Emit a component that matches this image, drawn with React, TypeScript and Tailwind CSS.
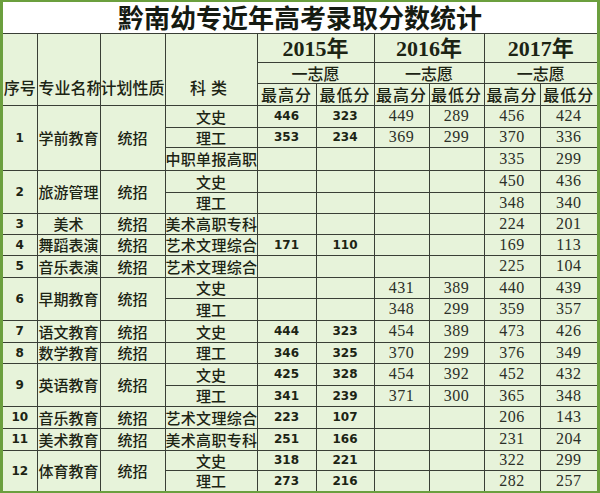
type Row = {
  head?: { no: string; name: string; span: number }
  kind: string
  wide?: boolean
  s: string[]
}

const rows: Row[] = [
  { head: { no: "1", name: "学前教育", span: 3 }, kind: "文史", s: ["446", "323", "449", "289", "456", "424"] },
  { kind: "理工", s: ["353", "234", "369", "299", "370", "336"] },
  { kind: "中职单报高职", wide: true, s: ["", "", "", "", "335", "299"] },
  { head: { no: "2", name: "旅游管理", span: 2 }, kind: "文史", s: ["", "", "", "", "450", "436"] },
  { kind: "理工", s: ["", "", "", "", "348", "340"] },
  { head: { no: "3", name: "美术", span: 1 }, kind: "美术高职专科", wide: true, s: ["", "", "", "", "224", "201"] },
  { head: { no: "4", name: "舞蹈表演", span: 1 }, kind: "艺术文理综合", wide: true, s: ["171", "110", "", "", "169", "113"] },
  { head: { no: "5", name: "音乐表演", span: 1 }, kind: "艺术文理综合", wide: true, s: ["", "", "", "", "225", "104"] },
  { head: { no: "6", name: "早期教育", span: 2 }, kind: "文史", s: ["", "", "431", "389", "440", "439"] },
  { kind: "理工", s: ["", "", "348", "299", "359", "357"] },
  { head: { no: "7", name: "语文教育", span: 1 }, kind: "文史", s: ["444", "323", "454", "389", "473", "426"] },
  { head: { no: "8", name: "数学教育", span: 1 }, kind: "理工", s: ["346", "325", "370", "299", "376", "349"] },
  { head: { no: "9", name: "英语教育", span: 2 }, kind: "文史", s: ["425", "328", "454", "392", "452", "432"] },
  { kind: "理工", s: ["341", "239", "371", "300", "365", "348"] },
  { head: { no: "10", name: "音乐教育", span: 1 }, kind: "艺术文理综合", wide: true, s: ["223", "107", "", "", "206", "143"] },
  { head: { no: "11", name: "美术教育", span: 1 }, kind: "美术高职专科", wide: true, s: ["251", "166", "", "", "231", "204"] },
  { head: { no: "12", name: "体育教育", span: 2 }, kind: "文史", s: ["318", "221", "", "", "322", "299"] },
  { kind: "理工", s: ["273", "216", "", "", "282", "257"] },
]

const heights = [
  "h-[22px]", "h-[20px]", "h-[23px]", "h-[22px]", "h-[21px]", "h-[21px]",
  "h-[21px]", "h-[22px]", "h-[21px]", "h-[22px]", "h-[22px]", "h-[21px]",
  "h-[22px]", "h-[21px]", "h-[22px]", "h-[22px]", "h-[20px]", "h-[21px]",
]

const line = "border border-[#3a3f36]"
const cjk = "font-['Noto_Sans_CJK_SC',sans-serif]"
const boldNum = "font-['DejaVu_Sans',sans-serif] font-bold text-[12px]"
const thinNum = "font-['Liberation_Serif','DejaVu_Serif',serif] text-[16px] tracking-[0.5px] text-[#2b2f28]"

export default function App() {
  return (
    <div className="w-[600px] h-[493px] bg-[#6b9f3e] pl-[3px] pr-[3px] pt-[2px] pb-[2px]">
      <table className="w-[594px] table-fixed border-collapse border-hidden bg-[#e7f3da] text-[#1c2414]">
        <colgroup>
          <col className="w-[34px]" />
          <col className="w-[63px]" />
          <col className="w-[65px]" />
          <col className="w-[92px]" />
          <col className="w-[59px]" />
          <col className="w-[58px]" />
          <col className="w-[55px]" />
          <col className="w-[55px]" />
          <col className="w-[56px]" />
          <col className="w-[57px]" />
        </colgroup>
        <tbody>
          <tr className="h-[31px]">
            <td colSpan={10} className={`${line} bg-white p-0 text-center text-[26px] leading-[30px] font-bold ${cjk} text-[#151a12]`}>
              黔南幼专近年高考录取分数统计
            </td>
          </tr>
          <tr className="h-[29px]">
            <td rowSpan={3} className={`${line} p-0 pb-[8px] align-bottom text-center text-[16px] leading-5 font-medium whitespace-nowrap ${cjk}`}>
              序号
            </td>
            <td rowSpan={3} className={`${line} p-0 pb-[8px] pl-[1px] align-bottom text-left text-[16px] leading-5 font-medium whitespace-nowrap overflow-hidden ${cjk}`}>
              专业名称
            </td>
            <td rowSpan={3} className={`${line} p-0 pb-[8px] align-bottom text-left text-[16px] leading-5 font-medium whitespace-nowrap overflow-hidden ${cjk}`}>
              计划性质
            </td>
            <td rowSpan={3} className={`${line} p-0 pb-[8px] align-bottom text-center text-[16px] leading-5 font-medium tracking-[5px] whitespace-nowrap ${cjk}`}>
              科类
            </td>
            {["2015", "2016", "2017"].map((y) => (
              <td key={y} colSpan={2} className={`${line} p-0 text-center text-[22px] leading-none font-bold font-['Liberation_Serif','Noto_Sans_CJK_SC',serif]`}>
                {y}
                <span className={`${cjk} font-bold`}>年</span>
              </td>
            ))}
          </tr>
          <tr className="h-[21px]">
            {[0, 1, 2].map((i) => (
              <td key={i} colSpan={2} className={`${line} p-0 text-center text-[16px] leading-none font-medium ${cjk}`}>
                一志愿
              </td>
            ))}
          </tr>
          <tr className="h-[22px]">
            {[0, 1, 2].map((i) => (
              <>
                <td key={`h${i}`} className={`${line} p-0 text-center text-[16px] leading-none font-medium tracking-[1px] whitespace-nowrap ${cjk}`}>
                  最高分
                </td>
                <td key={`l${i}`} className={`${line} p-0 text-center text-[16px] leading-none font-medium tracking-[1px] whitespace-nowrap ${cjk}`}>
                  最低分
                </td>
              </>
            ))}
          </tr>
          {rows.map((r, idx) => (
            <tr key={idx} className={heights[idx]}>
              {r.head && (
                <>
                  <td rowSpan={r.head.span} className={`${line} p-0 text-center ${boldNum}`}>
                    {r.head.no}
                  </td>
                  <td rowSpan={r.head.span} className={`${line} p-0 text-center text-[15px] leading-none font-medium whitespace-nowrap ${cjk}`}>
                    {r.head.name}
                  </td>
                  <td rowSpan={r.head.span} className={`${line} p-0 text-center text-[15px] leading-none font-medium whitespace-nowrap ${cjk}`}>
                    统招
                  </td>
                </>
              )}
              <td className={`${line} p-0 text-[15px] leading-none font-medium whitespace-nowrap ${r.wide ? "text-left tracking-[0.3px]" : "text-center"} ${cjk}`}>
                {r.kind}
              </td>
              {r.s.map((v, j) => (
                <td key={j} className={`${line} p-0 text-center leading-none ${j < 2 ? boldNum : thinNum}`}>
                  {v}
                </td>
              ))}
            </tr>
          ))}
        </tbody>
      </table>
    </div>
  )
}
